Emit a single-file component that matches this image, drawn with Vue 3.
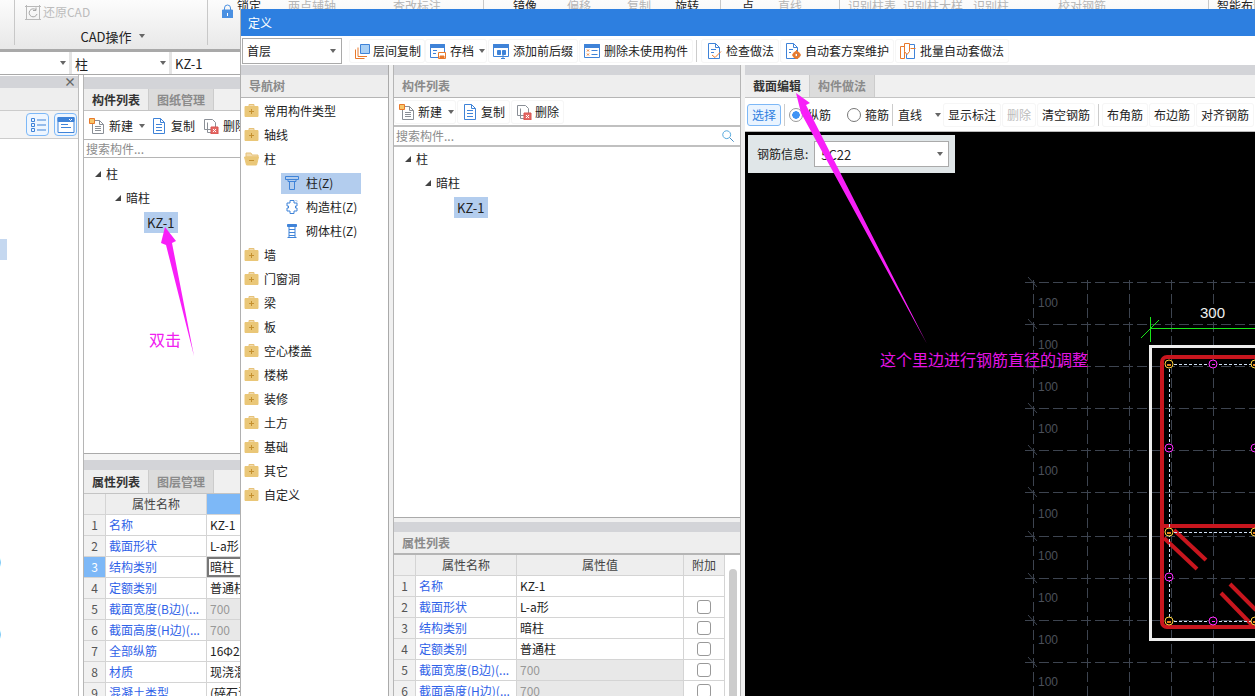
<script setup>
import { h } from 'vue'

const B = '#3f83d8'
const O = '#e8792b'
const G = '#8a8f96'

const icons = {
  layer: [['M6.5 1.5h9v9h-9z', B, '#a9d0f5'], ['M4 4.5v9h9', O], ['M1.5 6.5v9h9', O]],
  save: [['M.5 1.5h14v13h-14z', B, '#fff'], ['M.5 1.5h14v3h-14z', B, B], ['M3 7.5h4M3 10.5h3', B], ['M8.5 9.5h7v6h-7z', O, '#fff'], ['M10 13h4v2h-4z', O, O]],
  prefix: [['M.5 1.5h15v12h-15z', B, '#fff'], ['M.5 1.5h15v3h-15z', B, B], ['M4.5 7.5h3v4h-3z', B, B], ['M9.5 7.5h3v4h-3z', B, B], ['M10 11v4M8 15.5h4', B]],
  unused: [['M.5 1.5h15v13h-15z', B, '#fff'], ['M.5 1.5h15v3h-15z', B, B], ['M7.5 7.5h6M7.5 11.5h6', B], ['M3 6.5l2 2M5 6.5l-2 2M3 10.5l2 2M5 10.5l-2 2', O]],
  check: [['M2.5.5h7l4 4v11h-11z', B, '#fff'], ['M9.5.5v4h4', B], ['M5 6.5h5M5 9.5h3', B], ['M6 12l3 2.5 6-6', O]],
  auto: [['M1.5.5h7l4 4v11h-11z', B, '#fff'], ['M8.5.5v4h4', B], ['M4 6.5h4M4 9.5h2', B], ['M11.5 8.5a3.5 3.5 0 1 0 .01 0zM11.5 10.5a1.5 1.5 0 1 1-.01 0z', O, O], ['M11.5 7v1.5M11.5 15v1.5M7 12h1.5M15 12h1', O]],
  batch: [['M.5 3.5h4v12h-4z', O, '#fff'], ['M6.5 1.5h8v14h-8z', B, '#fff'], ['M4.5 .5h5v8l-2.5 3-2.5-3z', O, '#fff'], ['M10.5 5.5h5', O]],
  newdoc: [['M3.5 2.5h7l4 4v9h-11z', G, '#fff'], ['M10.5 2.5v4h4', G], ['M6 8.5h6M6 10.5h6M6 12.5h6', G], ['M.5 .5h5v5h-5z', O, '#f7c66b']],
  copy: [['M2.5.5h7l4 4v11h-11z', B, '#fff'], ['M9.5.5v4h4', B], ['M5 6.5h6M5 9.5h6M5 12.5h6', B]],
  del: [['M1.5 1.5h8l3 3v7h-11z', G, '#fff'], ['M4.5 4.5v10h5', G], ['M8 9h7v7h-7z', '#d9534f', '#e56a66'], ['M10 11l3 3M13 11l-3 3', '#fff']],
  fplus: [['M5 1.5h5v2h-5z', '#e6c27a', '#f3dcae'], ['M1 3.5h13v10H1z', '#eac778', '#eac778'], ['M5 8.5h5M7.5 6v5', '#c4902f']],
  fminus: [['M2 2h5l1 2h6v2H2z', '#e6c27a', '#f3dcae'], ['M.5 6h14l-2 8H2.5z', '#eac778', '#eac778'], ['M5 9.5h5', '#c4902f']],
  colT: [['M1.5 1.5h13v3h-13z', B, 'none'], ['M4 4.5v2h8v-2', B], ['M5.5 6.5v8h5v-8', B]],
  colS: [['M6 1.5h4v2.5h3v3h-1.5v2h1.5v3h-3v2.5h-4v-2.5h-3v-3h1.5v-2h-1.5v-3h3z', B, '#fff'], ['M11 1.5h2v2', '#b8d0ee']],
  colB: [['M3.5 1.5h9v2h-9z', B, B], ['M5 3.5v11h6v-11z', B, '#fff'], ['M5 6.5h6M5 9.5h6M5 12.5h6', B], ['M3.5 14.5h9', B]],
  search: [['M6.5 2a4.5 4.5 0 1 0 .01 0z', '#3d9bd8', '#fff'], ['M10 10l4.5 4.5', '#2f7fb8']],
  list: [['M2.5 2.5h3v3h-3zM2.5 7.5h3v3h-3zM2.5 12.5h3v3h-3z', B], ['M8 4h9M8 9h9M8 14h9', B]],
  panel: [['M1 1.5h16v15H1z', B, '#fff'], ['M1 1.5h16v4H1z', B, B], ['M4 8.5h7M4 11.5h10', B], ['M12 3l1.5 1.5L15 3', '#fff']],
  restore: [['M2.5 3.5h13v13h-13z', '#b9b9b9'], ['M1 3.5h3M14 3.5h3M2.5 2v3M15.5 2v3M1 16.5h3M14 16.5h3', '#b9b9b9'], ['M12 7a4 4 0 1 0 1 4M12 4.5v3h-3', '#a8a8a8']],
  lock: [['M3.5 6V4a3 3 0 0 1 6 0v2', '#4a90e2'], ['M1.5 6h10v9h-10z', '#4a90e2', '#4a90e2'], ['M6.5 9v3', '#fff']]
}

// small svg icon drawn from the table above
const Ico = props =>
  h(
    'svg',
    { width: props.size || 16, height: props.size || 16, viewBox: '0 0 ' + (props.box || 16) + ' ' + (props.box || 16), style: 'flex:none;display:block' },
    icons[props.name].map(p => h('path', { d: p[0], stroke: p[1], fill: p[2] || 'none', 'stroke-width': 1 }))
  )
Ico.props = ['name', 'size', 'box']

const ribbonGroups = [
  { w: 484, left: 237, items: [{ t: '锁定', w: 51 }, { t: '两点辅轴', w: 105, gray: true }, { t: '查改标注', w: 60, gray: true }] },
  { w: 237, left: 29, items: [{ t: '镜像', w: 54 }, { t: '偏移', w: 60, gray: true }, { t: '复制', w: 48, gray: true }, { t: '旋转', w: 40 }] },
  { w: 119, left: 21, items: [{ t: '点', w: 36 }, { t: '直线', w: 40, gray: true }] },
  { w: 369, left: 8, items: [{ t: '识别柱表', w: 55, gray: true }, { t: '识别柱大样', w: 70, gray: true }, { t: '识别柱', w: 85, gray: true }, { t: '校对钢筋', w: 60, gray: true }] },
  { w: 46, left: 8, items: [{ t: '智能布置', w: 50 }] }
]

const leftRows = [
  { n: 1, name: '名称', val: 'KZ-1' },
  { n: 2, name: '截面形状', val: 'L-a形' },
  { n: 3, name: '结构类别', val: '暗柱', cur: true },
  { n: 4, name: '定额类别', val: '普通柱' },
  { n: 5, name: '截面宽度(B边)(...', val: '700', off: true },
  { n: 6, name: '截面高度(H边)(...', val: '700', off: true },
  { n: 7, name: '全部纵筋', val: '16Φ22' },
  { n: 8, name: '材质', val: '现浇混凝土' },
  { n: 9, name: '混凝土类型', val: '(碎石混凝土)' }
]
const dlgRows = leftRows.slice(0, 6)

const compTree = [
  { label: '柱', lv: 0 },
  { label: '暗柱', lv: 1 }
]

const navTop = ['常用构件类型', '轴线']
const navSub = [
  { icon: 'colT', label: '柱(Z)', sel: true },
  { icon: 'colS', label: '构造柱(Z)' },
  { icon: 'colB', label: '砌体柱(Z)' }
]
const navRest = ['墙', '门窗洞', '梁', '板', '空心楼盖', '楼梯', '装修', '土方', '基础', '其它', '自定义']

const gridH = [282, 324, 366, 408, 450, 492, 536, 578, 620, 662]
const gridV = [1033, 1087, 1129, 1171, 1213, 1255]
const labelY = [303, 345, 387, 429, 471, 514, 556, 598, 640, 682]
const yellow = [[1169, 364], [1255, 364], [1169, 532], [1255, 532], [1169, 621], [1255, 621]]
const pink = [[1213, 364], [1169, 448], [1255, 448], [1169, 577], [1213, 621]]
const bars = [
  [1164, 538, 1197, 569],
  [1174, 530, 1206, 560],
  [1221, 593, 1253, 626],
  [1230, 584, 1256, 610]
]
</script>

<template>
  <div class="page">
    <!-- main window behind the dialog -->
    <div class="ribbon">
      <div class="rib-first"></div>
      <div class="rib-cad">
        <div class="rib-restore"><Ico name="restore" :size="18" :box="18" /><span>还原CAD</span></div>
        <div class="rib-title">CAD操作<i class="caret"></i></div>
      </div>
      <div class="rib-rest">
        <div class="rib-lock"><Ico name="lock" :size="14" :box="14" /></div>
        <div v-for="(g, i) in ribbonGroups" :key="i" class="rib-group" :style="{ width: g.w + 'px', paddingLeft: g.left + 'px' }">
          <span v-for="it in g.items" :key="it.t" class="rib-item" :class="{ gray: it.gray }" :style="{ width: it.w + 'px' }">{{ it.t }}</span>
        </div>
      </div>
    </div>
    <div class="combos">
      <div class="combo c1"><i class="caret"></i></div>
      <div class="combo c2"><span>柱</span><i class="caret"></i></div>
      <div class="combo c3"><span>KZ-1</span></div>
    </div>

    <div class="panels">
      <div class="far-left">
        <div class="strip close-strip"><span class="close-x">×</span></div>
        <div class="far-tabs"></div>
        <div class="far-tools">
          <span class="ibtn"><Ico name="list" :size="18" :box="18" /></span>
          <span class="ibtn"><Ico name="panel" :size="18" :box="18" /></span>
        </div>
        <div class="far-body">
          <div class="far-sel"></div>
          <span class="cut-a">)</span>
          <span class="cut-b">)</span>
        </div>
      </div>

      <div class="comp-pane">
        <div class="strip s12"></div>
        <div class="tabs">
          <span class="tab on">构件列表</span>
          <span class="tab">图纸管理</span>
        </div>
        <div class="mini-tools">
          <span class="mt"><Ico name="newdoc" />新建<i class="caret cm"></i></span>
          <span class="mt"><Ico name="copy" />复制</span>
          <span class="mt"><Ico name="del" />删除</span>
        </div>
        <div class="search s-left">搜索构件...</div>
        <div class="tree t-left">
          <div v-for="r in compTree" :key="r.label" class="tr" :style="{ paddingLeft: 11 + r.lv * 20 + 'px' }">
            <i class="arrow"></i><span>{{ r.label }}</span>
          </div>
          <div class="leaf-row"><span class="leaf">KZ-1</span></div>
        </div>
        <div class="gap5"></div>
        <div class="strip s10"></div>
        <div class="tabs t23">
          <span class="tab on">属性列表</span>
          <span class="tab">图层管理</span>
        </div>
        <table class="grid g-left">
          <colgroup><col class="c-idx" /><col class="c-name" /><col class="c-val-left" /></colgroup>
          <tbody>
            <tr class="head">
              <td></td>
              <td class="ctr">属性名称</td>
              <td class="ctr picked"></td>
            </tr>
            <tr v-for="r in leftRows" :key="r.n">
              <td class="idx" :class="{ picked: r.cur }">{{ r.n }}</td>
              <td class="nm">{{ r.name }}</td>
              <td :class="{ off: r.off, cur: r.cur }">{{ r.val }}</td>
            </tr>
          </tbody>
        </table>
      </div>
    </div>

    <!-- definition dialog -->
    <div class="dialog">
      <div class="dlg-title">定义</div>
      <div class="dlg-tools">
        <div class="floor"><span>首层</span><i class="caret"></i></div>
        <span class="t-btn first"><Ico name="layer" />层间复制</span>
        <span class="t-btn store"><Ico name="save" />存档<i class="caret ct"></i></span>
        <span class="t-btn"><Ico name="prefix" />添加前后缀</span>
        <span class="t-btn"><Ico name="unused" />删除未使用构件</span>
        <i class="sep sep-dlg"></i>
        <span class="t-btn"><Ico name="check" />检查做法</span>
        <span class="t-btn"><Ico name="auto" />自动套方案维护</span>
        <span class="t-btn"><Ico name="batch" />批量自动套做法</span>
      </div>

      <div class="dlg-body">
        <div class="nav-col">
          <div class="strip s10"></div>
          <div class="col-head">导航树</div>
          <div class="nav-tree">
            <div v-for="n in navTop" :key="n" class="nav-row"><Ico name="fplus" /><span>{{ n }}</span></div>
            <div class="nav-row"><Ico name="fminus" /><span>柱</span></div>
            <div v-for="s in navSub" :key="s.label" class="nav-sub">
              <span class="sub-in" :class="{ sel: s.sel }"><Ico :name="s.icon" /><span>{{ s.label }}</span></span>
            </div>
            <div v-for="n in navRest" :key="n" class="nav-row"><Ico name="fplus" /><span>{{ n }}</span></div>
          </div>
        </div>

        <div class="list-col">
          <div class="strip s10"></div>
          <div class="col-head">构件列表</div>
          <div class="list-tools">
            <span class="t-btn newb"><Ico name="newdoc" />新建<i class="caret ct"></i></span>
            <span class="t-btn"><Ico name="copy" />复制</span>
            <span class="t-btn"><Ico name="del" />删除</span>
          </div>
          <div class="search s-dlg"><span>搜索构件...</span><Ico name="search" :size="14" /></div>
          <div class="tree t-dlg">
            <div v-for="r in compTree" :key="r.label" class="tr" :style="{ paddingLeft: 11 + r.lv * 20 + 'px' }">
              <i class="arrow"></i><span>{{ r.label }}</span>
            </div>
            <div class="leaf-row"><span class="leaf">KZ-1</span></div>
          </div>
          <div class="gap4"></div>
          <div class="strip s10"></div>
          <div class="col-head h21">属性列表</div>
          <div class="grid-wrap">
            <table class="grid g-dlg">
              <colgroup><col class="c-idx" /><col class="c-name" /><col class="c-val" /><col class="c-ext" /></colgroup>
              <tbody>
                <tr class="head">
                  <td></td>
                  <td class="ctr">属性名称</td>
                  <td class="ctr">属性值</td>
                  <td class="ctr">附加</td>
                </tr>
                <tr v-for="r in dlgRows" :key="r.n">
                  <td class="idx">{{ r.n }}</td>
                  <td class="nm">{{ r.name }}</td>
                  <td :class="{ off: r.off }">{{ r.val }}</td>
                  <td class="ctr"><i v-if="r.n > 1" class="chk"></i></td>
                </tr>
              </tbody>
            </table>
            <div class="scroll"><div class="thumb"></div></div>
          </div>
        </div>

        <div class="edit-col">
          <div class="strip s10"></div>
          <div class="tabs t22">
            <span class="tab on">截面编辑</span>
            <span class="tab">构件做法</span>
          </div>
          <div class="edit-tools">
            <span class="pick">选择</span>
            <i class="sep"></i>
            <label class="radio first-r"><i class="dot on"></i>纵筋</label>
            <label class="radio"><i class="dot"></i>箍筋</label>
            <i class="sep"></i>
            <span class="line-sel">直线<i class="caret"></i></span>
            <span class="t-btn z">显示标注</span>
            <span class="t-btn dim">删除</span>
            <span class="t-btn">清空钢筋</span>
            <i class="sep"></i>
            <span class="t-btn sp3">布角筋</span>
            <span class="t-btn">布边筋</span>
            <span class="t-btn">对齐钢筋</span>
          </div>
          <div class="canvas">
            <svg class="cad" width="510" height="564" viewBox="745 132 510 564">
              <g stroke="#3d4450" stroke-width="1" stroke-dasharray="10 4" shape-rendering="crispEdges">
                <line v-for="y in gridH" :key="'h' + y" x1="1025" :y1="y + 0.5" x2="1255" :y2="y + 0.5" />
                <line v-for="x in gridV" :key="'v' + x" :x1="x + 0.5" y1="280" :x2="x + 0.5" y2="696" />
              </g>
              <g stroke="#3d4450">
                <line v-for="y in gridH" :key="'t' + y" x1="1028" :y1="y - 5" x2="1037" :y2="y + 5" />
              </g>
              <text v-for="y in labelY" :key="'l' + y" x="1038" :y="y + 4" class="cad-num">100</text>
              <text x="1200" y="318" class="cad-dim">300</text>
              <g stroke="#19e619" stroke-width="1">
                <line x1="1150" y1="328.5" x2="1255" y2="328.5" />
                <line x1="1150.5" y1="317" x2="1150.5" y2="342" />
                <line x1="1141" y1="338" x2="1159" y2="320" />
              </g>
              <path d="M1256 346.5H1150.5V639.5H1256" fill="none" stroke="#eee" stroke-width="3" />
              <g fill="none" stroke="#c8161e" stroke-width="4">
                <path d="M1256 357H1167a5 5 0 0 0-5 5V622a5 5 0 0 0 5 5H1256" />
                <path d="M1162 526H1256" />
                <line v-for="(b, i) in bars" :key="i" :x1="b[0]" :y1="b[1]" :x2="b[2]" :y2="b[3]" />
              </g>
              <g stroke="#cfe0f5" stroke-width="1" stroke-dasharray="3 2" fill="none">
                <path d="M1169.5 364V621" />
                <path d="M1169 364.5H1255M1169 532.5H1255M1169 621.5H1255" />
              </g>
              <g v-for="c in yellow" :key="'y' + c[0] + c[1]">
                <circle :cx="c[0]" :cy="c[1]" r="4" fill="#000" stroke="#ffd23c" />
                <rect :x="c[0] - 2" :y="c[1]" width="4" height="2" fill="#e8821e" />
              </g>
              <g v-for="c in pink" :key="'p' + c[0] + c[1]">
                <circle :cx="c[0]" :cy="c[1]" r="4" fill="#000" stroke="#ff2cff" />
                <rect :x="c[0] - 1" :y="c[1]" width="3" height="1" fill="#ff2cff" />
              </g>
            </svg>
            <div class="info">
              <span>钢筋信息:</span>
              <div class="info-sel"><span>5C22</span><i class="caret"></i></div>
            </div>
          </div>
        </div>
      </div>
    </div>

    <!-- hand drawn notes on top of everything -->
    <svg class="notes" width="1255" height="696" viewBox="0 0 1255 696">
      <polygon points="165,227 176,241 172,243 194,356 166,245 161,243" fill="#f81ff8" />
      <polygon points="796,93 810,103 806,105 927,344 801,113" fill="#f81ff8" />
    </svg>
    <span class="note n1">双击</span>
    <span class="note n2">这个里边进行钢筋直径的调整</span>
  </div>
</template>

<style scoped>
.page {
  position: relative;
  width: 1255px;
  height: 696px;
  overflow: hidden;
  background: #fff;
  font-family: "Noto Sans CJK SC", "Liberation Sans", sans-serif;
  font-size: 12px;
  color: #222;
  line-height: 1;
}
i {
  display: block;
  font-style: normal;
}

.ribbon {
  display: flex;
  height: 52px;
  box-sizing: border-box;
  border-bottom: 3px solid #a9a9a9;
  background: linear-gradient(#fcfcfc, #e8e8e8);
}
.rib-first {
  width: 14px;
  border-right: 1px solid #c8c8c8;
  margin-bottom: 4px;
}
.rib-cad {
  width: 193px;
  margin-bottom: 4px;
  border-right: 1px solid #c8c8c8;
  display: flex;
  flex-direction: column;
}
.rib-restore {
  display: flex;
  align-items: center;
  gap: 1px;
  height: 18px;
  margin: 3px 0 0 9px;
  font-size: 12px;
  color: #bcbcbc;
}
.rib-title {
  display: flex;
  align-items: center;
  justify-content: center;
  gap: 7px;
  margin-top: 7px;
  height: 16px;
  padding-left: 3px;
  font-size: 13px;
}
.rib-rest {
  display: flex;
  flex: 1;
  position: relative;
  margin-left: -208px;
  pointer-events: none;
}
.rib-lock {
  position: absolute;
  left: 221px;
  top: 4px;
}
.rib-group {
  box-sizing: border-box;
  display: flex;
  flex: none;
  height: 10px;
  overflow: hidden;
  border-right: 1px solid #c8c8c8;
}
.rib-item {
  flex: none;
  white-space: nowrap;
  line-height: 11px;
}
.rib-item.gray {
  color: #b5b5b5;
}

.caret {
  width: 0;
  height: 0;
  border-left: 3.5px solid transparent;
  border-right: 3.5px solid transparent;
  border-top: 4px solid #666;
  flex: none;
}
.combos {
  display: flex;
  gap: 3px;
  height: 23px;
  box-sizing: border-box;
  border-bottom: 1px solid #a9a9a9;
  background: #e4e4e4;
}
.combo {
  display: flex;
  align-items: center;
  justify-content: space-between;
  box-sizing: border-box;
  background: #fff;
  padding: 0 3px;
  font-size: 13px;
}
.c1 {
  width: 69px;
  justify-content: flex-end;
}
.c2 {
  width: 97px;
}
.c3 {
  flex: 1;
}

.panels {
  display: flex;
  height: 621px;
}
.strip {
  background: #d3d4d8;
  flex: none;
}
.s10 {
  height: 10px;
}
.s12 {
  height: 12px;
  margin-top: 2px;
}
.far-left {
  width: 79px;
  box-sizing: border-box;
  border-right: 1px solid #bbb;
  padding-top: 1px;
  display: flex;
  flex-direction: column;
  flex: none;
}
.close-strip {
  height: 12px;
  display: flex;
  justify-content: flex-end;
  align-items: center;
  padding-right: 2px;
}
.close-x {
  font-size: 12px;
  font-weight: 700;
  color: #666;
}
.far-tabs {
  height: 22px;
  border-bottom: 1px solid #ccc;
  background: #eee;
}
.far-tools {
  height: 27px;
  display: flex;
  justify-content: flex-end;
  align-items: center;
  gap: 5px;
  padding-right: 1px;
  border-bottom: 1px solid #ccc;
  background: #f4f4f4;
}
.ibtn {
  display: flex;
  align-items: center;
  justify-content: center;
  width: 21px;
  height: 21px;
  border: 1px solid #7db8f7;
  border-radius: 4px;
  background: #eef6ff;
}
.far-body {
  position: relative;
  flex: 1;
  background: #fff;
}
.far-sel {
  width: 7px;
  height: 21px;
  margin-top: 100px;
  background: #c5d8f0;
}
.cut-a,
.cut-b {
  position: absolute;
  left: -3px;
  font-size: 13px;
}
.cut-a {
  top: 416px;
}
.cut-b {
  top: 488px;
}

.comp-pane {
  width: 157px;
  margin-left: 4px;
  flex: none;
  overflow: hidden;
  box-sizing: border-box;
  border-left: 1px solid #b5b5b5;
  display: flex;
  flex-direction: column;
}
.tabs {
  display: flex;
  height: 22px;
  flex: none;
  box-sizing: border-box;
  border-bottom: 1px solid #c4c4c4;
  background: #f0f0f0;
}
.t23 {
  height: 24px;
}
.t22 {
  height: 23px;
}
.tab {
  display: flex;
  align-items: center;
  justify-content: center;
  width: 64px;
  font-weight: 700;
  color: #8b8b8b;
  background: #dcdcdc;
  border-right: 1px solid #ccc;
}
.tab.on {
  color: #333;
  background: #eee;
}
.mini-tools {
  display: flex;
  align-items: center;
  height: 27px;
  padding-top: 1px;
  flex: none;
  background: #fff;
  border-bottom: 1px solid #b5b5b5;
  padding-left: 5px;
  white-space: nowrap;
}
.mt {
  display: flex;
  align-items: center;
  gap: 4px;
  margin-right: 8px;
  flex: none;
}
.cm {
  margin-left: 2px;
  margin-right: -2px;
}
.search {
  flex: none;
  display: flex;
  align-items: center;
  background: #fff;
  color: #8c8c8c;
}
.s-left {
  height: 18px;
  padding-left: 2px;
  box-sizing: border-box;
  border-bottom: 1px solid #b5b5b5;
}
.t-left {
  height: 296px;
  padding-top: 3px;
  box-sizing: border-box;
  border-bottom: 1px solid #aaa;
}
.t-left .tr:first-child {
  height: 25px;
}
.tree {
  flex: none;
  background: #fff;
}
.tr {
  display: flex;
  align-items: center;
  height: 24px;
}
.arrow {
  width: 0;
  height: 0;
  border-style: solid;
  border-width: 0 0 6px 6px;
  border-color: transparent transparent #444 transparent;
  margin-right: 5px;
}
.leaf-row {
  height: 24px;
  padding-left: 60px;
  display: flex;
  align-items: center;
}
.leaf {
  display: flex;
  align-items: center;
  height: 21px;
  padding: 0 4px 0 3px;
  font-size: 13px;
  background: #b3cdee;
}
.gap5 {
  height: 6px;
  background: #f4f4f4;
  flex: none;
}
.grid {
  table-layout: fixed;
  border-collapse: separate;
  border-spacing: 0;
  flex: none;
}
.g-left {
  width: 300px;
}
.g-dlg {
  width: 331px;
}
.c-idx {
  width: 22px;
}
.c-name {
  width: 101px;
}
.c-val {
  width: 167px;
}
.c-ext {
  width: 41px;
}
.grid td {
  height: 21px;
  box-sizing: border-box;
  padding: 0 3px;
  border-right: 1px solid #d4d4d4;
  border-bottom: 1px solid #d4d4d4;
  overflow: hidden;
  white-space: nowrap;
  background: #fff;
}
.grid .head td {
  background: #eee;
  color: #444;
}
.grid .ctr {
  text-align: center;
}
.grid .idx {
  padding: 0;
  text-align: center;
  background: #f1f1f1;
  color: #555;
}
.grid .nm {
  color: #2f62e8;
}
.grid .off {
  background: #e8e8e8;
  color: #999;
}
.grid .cur {
  box-shadow: inset 0 0 0 2px #777;
}
.grid .head .picked,
.grid .picked {
  background: #7db8f7;
  color: #fff;
}

.dialog {
  position: absolute;
  left: 240px;
  top: 9px;
  width: 1015px;
  height: 687px;
  display: flex;
  flex-direction: column;
  box-sizing: border-box;
  border-left: 1px solid #b0b0b0;
  background: #fff;
}
.dlg-title {
  height: 27px;
  flex: none;
  display: flex;
  align-items: center;
  padding-left: 7px;
  color: #fff;
  background: #2d7fe0;
}
.dlg-tools {
  height: 29px;
  flex: none;
  display: flex;
  align-items: center;
  padding-left: 1px;
}
.floor {
  width: 100px;
  height: 26px;
  box-sizing: border-box;
  border: 1px solid #aaa;
  display: flex;
  align-items: center;
  justify-content: space-between;
  padding: 0 5px 0 4px;
  flex: none;
}
.t-btn {
  display: flex;
  align-items: center;
  gap: 4px;
  height: 24px;
  padding: 0 5px;
  margin-left: 1px;
  border-radius: 3px;
  box-shadow: inset 0 0 0 1px #f6f6f6;
  white-space: nowrap;
  flex: none;
}
.t-btn.first {
  margin-left: 7px;
  gap: 3px;
  padding-right: 4px;
}
.t-btn.store {
  margin-left: 0;
  padding-right: 2px;
}
.ct {
  margin-left: 1px;
}
.sep {
  width: 1px;
  height: 22px;
  background: #ccc;
  margin-left: 3px;
  flex: none;
}
.sep-dlg {
  margin: 0 3px;
}
.dlg-body {
  flex: 1;
  min-height: 0;
  display: flex;
  background: #f0f0f0;
}
.nav-col {
  width: 148px;
  flex: none;
  display: flex;
  flex-direction: column;
  box-sizing: border-box;
  border-right: 1px solid #aaa;
  background: #fff;
}
.col-head {
  height: 23px;
  flex: none;
  box-sizing: border-box;
  display: flex;
  align-items: center;
  padding-left: 8px;
  font-weight: 700;
  color: #8a8a8a;
  background: #eee;
  border-bottom: 1px solid #b5b5b5;
}
.col-head.h21 {
  height: 23px;
  border-bottom-width: 2px;
}
.nav-tree {
  padding-top: 1px;
}
.nav-row {
  display: flex;
  align-items: center;
  gap: 4px;
  height: 24px;
  padding-left: 3px;
}
.nav-sub {
  height: 24px;
  padding-left: 40px;
  display: flex;
  align-items: center;
}
.sub-in {
  display: flex;
  align-items: center;
  gap: 6px;
  width: 80px;
  height: 21px;
  padding-left: 3px;
  box-sizing: border-box;
  white-space: nowrap;
}
.sub-in.sel {
  background: #b3cdee;
}
.list-col {
  width: 348px;
  margin-left: 4px;
  flex: none;
  display: flex;
  flex-direction: column;
  box-sizing: border-box;
  border-left: 1px solid #b5b5b5;
  border-right: 1px solid #b5b5b5;
  overflow: hidden;
}
.list-tools {
  height: 27px;
  flex: none;
  display: flex;
  align-items: center;
  background: #fff;
  border-bottom: 2px solid #c0c0c0;
}
.list-tools .t-btn {
  gap: 3px;
}
.list-tools .newb {
  margin-left: 0;
  padding-right: 2px;
}
.list-tools .ct {
  margin-left: 3px;
}
.s-dlg {
  height: 20px;
  padding: 0 5px 0 2px;
  justify-content: space-between;
  box-sizing: border-box;
  border-bottom: 2px solid #c0c0c0;
}
.t-dlg {
  height: 371px;
  box-sizing: border-box;
  border-bottom: 1px solid #aaa;
}
.gap4 {
  height: 4px;
  flex: none;
}
.grid-wrap {
  display: flex;
  flex: 1;
  background: #fff;
  overflow: hidden;
}
.scroll {
  flex: 1;
  padding: 14px 0 0 4px;
}
.thumb {
  width: 8px;
  height: 200px;
  border-radius: 4px;
  background: #ccc;
}
.chk {
  width: 12px;
  height: 12px;
  margin: 0 auto;
  border: 1px solid #999;
  border-radius: 3px;
  background: #fff;
}
.edit-col {
  width: 510px;
  margin-left: 4px;
  flex: none;
  display: flex;
  flex-direction: column;
  overflow: hidden;
}
.edit-tools {
  height: 34px;
  flex: none;
  display: flex;
  align-items: center;
  box-sizing: border-box;
  padding-left: 2px;
  background: #fff;
  border-bottom: 1px solid #bbb;
}
.pick {
  width: 34px;
  height: 22px;
  box-sizing: border-box;
  display: flex;
  align-items: center;
  justify-content: center;
  color: #2f7fe0;
  background: #eaf4ff;
  border: 1px solid #7db8f7;
  border-radius: 3px;
  flex: none;
}
.radio {
  display: flex;
  align-items: center;
  gap: 4px;
  margin-left: 16px;
  flex: none;
}
.first-r {
  margin-left: 4px;
}
.dot {
  width: 14px;
  height: 14px;
  box-sizing: border-box;
  border: 1px solid #777;
  border-radius: 50%;
  background: #fff;
}
.dot.on {
  border-color: #999;
  background: radial-gradient(circle, #3f93f5 0 3.5px, #fff 4px);
}
.line-sel {
  width: 48px;
  height: 24px;
  display: flex;
  align-items: center;
  justify-content: space-between;
  box-sizing: border-box;
  padding: 0 2px 0 3px;
  margin-left: 2px;
  flex: none;
}
.t-btn.z {
  margin-left: 0;
}
.t-btn.sp3 {
  margin-left: 3px;
}
.t-btn.dim {
  color: #bbb;
}
.canvas {
  position: relative;
  flex: 1;
  background: #000;
  overflow: hidden;
}
.cad {
  display: block;
}
.cad-num {
  font-family: "Liberation Sans", sans-serif;
  font-size: 12px;
  fill: #4b505a;
}
.cad-dim {
  font-family: "Liberation Sans", sans-serif;
  font-size: 15px;
  fill: #eee;
}
.info {
  position: absolute;
  left: 3px;
  top: 3px;
  width: 207px;
  height: 38px;
  box-sizing: border-box;
  padding-left: 9px;
  display: flex;
  align-items: center;
  gap: 6px;
  background: #e0e6e8;
}
.info-sel {
  width: 135px;
  height: 26px;
  box-sizing: border-box;
  border: 1px solid #aaa;
  background: #fff;
  display: flex;
  align-items: center;
  justify-content: space-between;
  padding: 0 5px 0 6px;
  font-size: 13px;
}

.notes {
  position: absolute;
  left: 0;
  top: 0;
  pointer-events: none;
}
.note {
  position: absolute;
  font-size: 16px;
  line-height: 20px;
  white-space: nowrap;
}
.n1 {
  left: 149px;
  top: 329px;
  color: #f020f0;
}
.n2 {
  left: 880px;
  top: 349px;
  color: #e414e4;
}
</style>

<style>
html,
body {
  margin: 0;
  overflow: hidden;
}
</style>
